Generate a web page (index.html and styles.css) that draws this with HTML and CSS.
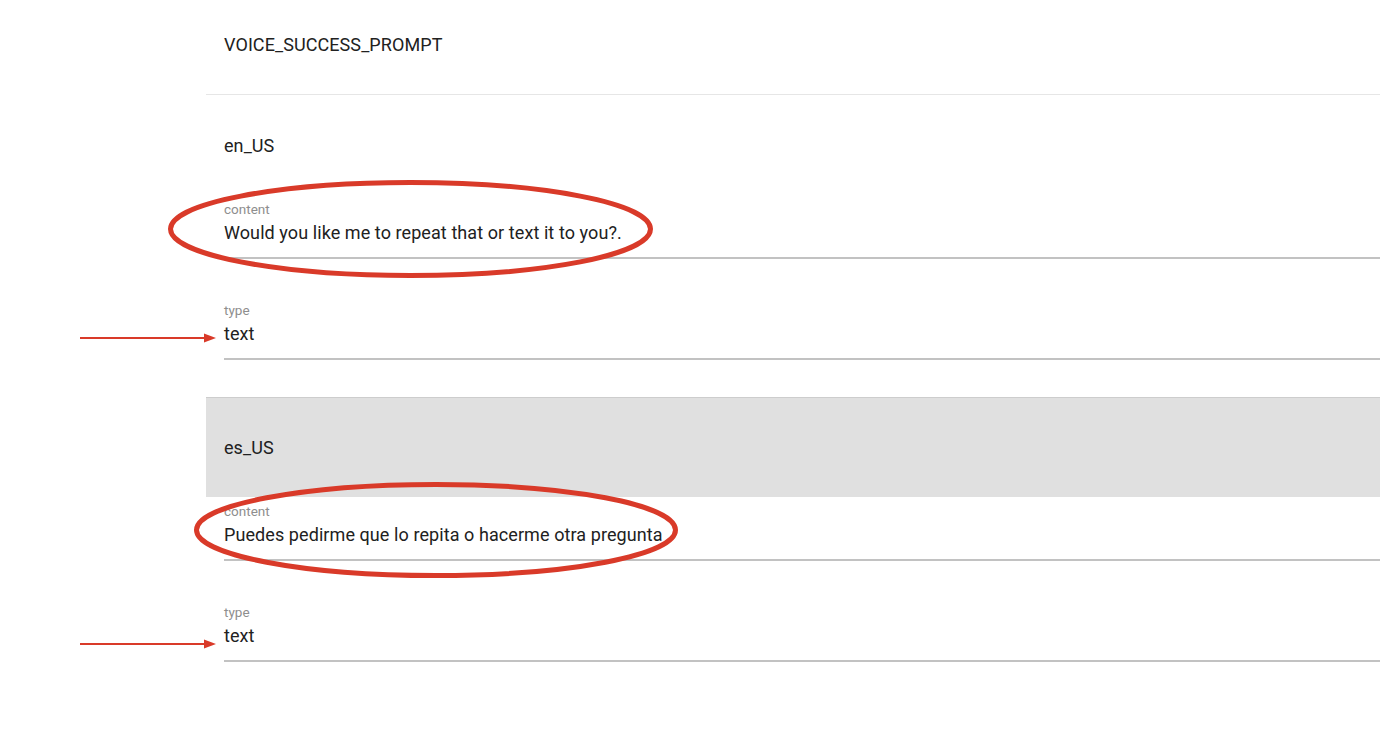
FILE: index.html
```html
<!DOCTYPE html>
<html>
<head>
<meta charset="utf-8">
<link rel="stylesheet" href="styles.css">
</head>
<body>
<div class="page">
  <div class="header">VOICE_SUCCESS_PROMPT</div>
  <div class="locale">
    <div class="locale-title">en_US</div>
    <div class="field">
      <div class="label">content</div>
      <div class="value">Would you like me to repeat that or text it to you?.</div>
    </div>
    <div class="field">
      <div class="label">type</div>
      <div class="value">text</div>
    </div>
  </div>
  <div class="locale">
    <div class="locale-title active">es_US</div>
    <div class="field">
      <div class="label">content</div>
      <div class="value">Puedes pedirme que lo repita o hacerme otra pregunta</div>
    </div>
    <div class="field">
      <div class="label">type</div>
      <div class="value">text</div>
    </div>
  </div>
</div>
<svg class="annotations" width="1380" height="734" viewBox="0 0 1380 734">
  <ellipse cx="410.5" cy="229" rx="240" ry="46.5" fill="none" stroke="#d93a29" stroke-width="5"/>
  <ellipse cx="436" cy="530" rx="239.5" ry="45.5" fill="none" stroke="#d93a29" stroke-width="5"/>
  <line x1="80" y1="338" x2="206" y2="338" stroke="#d93a29" stroke-width="2"/>
  <polygon points="204,333.5 216,338 204,342.5" fill="#d93a29"/>
  <line x1="80" y1="644" x2="206" y2="644" stroke="#d93a29" stroke-width="2"/>
  <polygon points="204,639.5 216,644 204,648.5" fill="#d93a29"/>
</svg>
</body>
</html>
```
FILE: styles.css
```css
html, body {
  margin: 0;
  padding: 0;
  background: #ffffff;
}
body {
  font-family: Roboto, "Liberation Sans", Arial, sans-serif;
  color: #212121;
  width: 1380px;
  height: 734px;
  overflow: hidden;
  position: relative;
}
.page {
  margin-left: 206px;
}
.header {
  height: 63px;
  padding: 31px 0 0 18px;
  font-size: 18px;
  line-height: 27px;
  letter-spacing: 0.08px;
  border-bottom: 1px solid #e6e6e6;
}
.locale-title {
  height: 100px;
  display: flex;
  align-items: center;
  padding-left: 18px;
  font-size: 18px;
  line-height: 27px;
  letter-spacing: 0.08px;
}
.locale-title.active {
  background: #e0e0e0;
  border-top: 1px solid #cdcdcd;
  height: 99px;
}
.field {
  margin-left: 18px;
  padding: 6px 0 10px;
  border-bottom: 2px solid #c2c2c2;
  margin-bottom: 37px;
}
.locale:last-child .field:last-child {
  margin-bottom: 0;
}
.label {
  font-size: 13.5px;
  line-height: 16px;
  color: #8e8e8e;
  margin-bottom: 2px;
}
.value {
  font-size: 18px;
  line-height: 28px;
  letter-spacing: 0.08px;
  color: #212121;
}
.annotations {
  position: absolute;
  left: 0;
  top: 0;
  pointer-events: none;
}
```
